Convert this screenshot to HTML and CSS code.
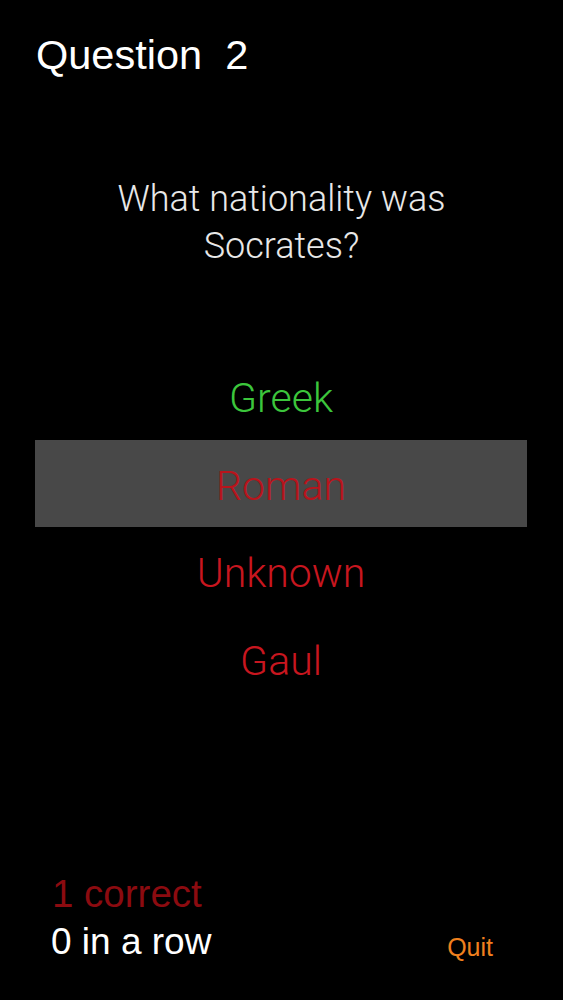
FILE: index.html
```html
<!DOCTYPE html>
<html lang="en">
<head>
<meta charset="utf-8">
<title>Quiz</title>
<link rel="stylesheet" href="styles.css">
</head>
<body>
<main class="screen">
  <h1 class="title">Question&nbsp; 2</h1>
  <p class="question">What nationality was<br>Socrates?</p>
  <ul class="answers">
    <li class="answer correct">Greek</li>
    <li class="answer wrong selected">Roman</li>
    <li class="answer wrong">Unknown</li>
    <li class="answer wrong">Gaul</li>
  </ul>
  <footer class="footer">
    <div class="stats">
      <div class="stat count">1 correct</div>
      <div class="stat streak">0 in a row</div>
    </div>
    <a class="quit">Quit</a>
  </footer>
</main>
</body>
</html>
```
FILE: styles.css
```css
html, body {
  margin: 0;
  padding: 0;
  background: #000;
}

.screen {
  display: flex;
  flex-direction: column;
  height: 1000px;
  box-sizing: border-box;
  padding-top: 31px;
  background: #000;
  font-family: "Liberation Sans", Arial, sans-serif;
}

.title {
  margin: 0;
  padding-left: 36px;
  font-size: 41.5px;
  font-weight: 400;
  line-height: 47px;
  color: #fff;
}

.question {
  margin: 98px 0 0;
  text-align: center;
  font-family: "Roboto", "Liberation Sans", sans-serif;
  font-weight: 300;
  font-size: 36px;
  line-height: 47px;
  color: #e8e8e8;
}

.answers {
  list-style: none;
  margin: 82px 36px 0 35px;
  padding: 0;
}

.answer {
  height: 88px;
  box-sizing: border-box;
  padding-top: 5px;
  line-height: 83px;
  text-align: center;
  font-family: "Roboto", "Liberation Sans", sans-serif;
  font-weight: 300;
  font-size: 41px;
}

.answer.selected {
  height: 87px;
  background: #484848;
}

.correct {
  color: #3cc63c;
}

.wrong {
  color: #c8161f;
}

.selected.wrong {
  color: #b8141c;
}

.footer {
  margin-top: auto;
  display: flex;
  justify-content: space-between;
  align-items: flex-end;
  padding: 0 70px 34px 51px;
}

.stat {
  font-size: 37px;
  line-height: 48px;
}

.count {
  font-size: 38.5px;
  padding-left: 1px;
  color: #8c0b10;
}

.streak {
  color: #fff;
}

.quit {
  font-size: 25px;
  line-height: 38px;
  color: #f0801e;
  cursor: pointer;
}
```
